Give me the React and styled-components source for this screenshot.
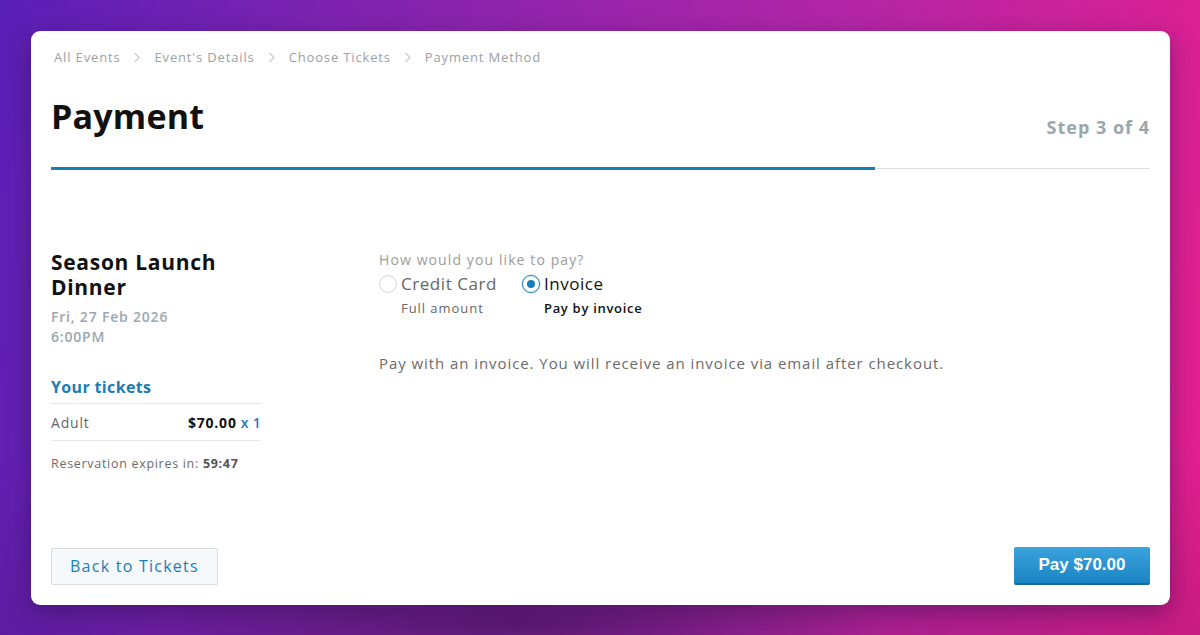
import React from "react";
import styled, { createGlobalStyle } from "styled-components";

const Global = createGlobalStyle`
  html, body { margin: 0; padding: 0; }
  body {
    width: 1200px;
    height: 635px;
    overflow: hidden;
    font-family: "Open Sans", "Noto Sans", sans-serif;
    background: linear-gradient(100deg, #5a1fb6 0%, #8a24ad 35%, #b326a6 65%, #e61f8c 100%);
  }
  * { box-sizing: border-box; }
`;

const Stage = styled.div`
  width: 1200px;
  height: 635px;
  padding: 31px 30px 30px 31px;
  background:
    radial-gradient(ellipse 520px 80px at 520px 625px, rgba(50, 20, 80, 0.55), transparent 70%),
    linear-gradient(180deg, rgba(0,0,0,0) 70%, rgba(40,10,60,0.15) 100%);
`;

const Card = styled.main`
  width: 1139px;
  height: 574px;
  background: #fff;
  border-radius: 9px;
  box-shadow: 0 8px 24px rgba(40, 10, 70, 0.45);
  padding: 0 20px 20px 20px;
  display: flex;
  flex-direction: column;
`;

const Breadcrumbs = styled.nav`
  display: flex;
  align-items: center;
  gap: 13px;
  padding: 17px 0 0 3px;
  height: 35px;
  font-size: 13px;
  color: #9aa1a6;
  letter-spacing: 0.85px;
`;

const Chevron = styled.svg`
  width: 8px;
  height: 11px;
  stroke: #c6cacd;
  fill: none;
  stroke-width: 1.2;
`;

const Header = styled.header`
  display: flex;
  align-items: flex-end;
  justify-content: space-between;
  height: 101px;
  padding-bottom: 10px;
`;

const Title = styled.h1`
  margin: 0 0 24px;
  font-size: 34px;
  font-weight: 700;
  color: #111;
  line-height: 1;
  letter-spacing: 0.2px;
`;

const Step = styled.div`
  font-size: 18px;
  font-weight: 700;
  color: #98a7ae;
  margin-bottom: 18px;
  letter-spacing: 1px;
`;

const Progress = styled.div`
  height: 3px;
  display: flex;
  align-items: center;
`;

const ProgressFill = styled.div`
  height: 3px;
  background: #1a7db5;
`;

const ProgressRest = styled.div`
  flex: 1;
  height: 1px;
  background: #dcdfe1;
`;

const Body = styled.section`
  flex: 1;
  display: flex;
  padding-top: 80px;
`;

const Sidebar = styled.aside`
  width: 210px;
  margin-right: 118px;
`;

const EventName = styled.h2`
  margin: 0;
  font-size: 21px;
  line-height: 25px;
  font-weight: 700;
  color: #111;
  letter-spacing: 0.7px;
`;

const EventDate = styled.div`
  margin-top: 7px;
  font-size: 14px;
  line-height: 20px;
  font-weight: 600;
  color: #9aa8b0;
  letter-spacing: 0.8px;
`;

const TicketsTitle = styled.h3`
  margin: 30px 0 0;
  font-size: 16px;
  font-weight: 700;
  line-height: 20px;
  color: #1a7db5;
  padding-bottom: 6px;
  border-bottom: 1px solid #e4e7e9;
  letter-spacing: 0.35px;
`;

const TicketRow = styled.div`
  display: flex;
  justify-content: space-between;
  align-items: center;
  height: 37px;
  border-bottom: 1px solid #e4e7e9;
  font-size: 14px;
  color: #666;
  letter-spacing: 0.8px;
`;

const Price = styled.span`
  font-weight: 700;
  color: #111;
`;

const Qty = styled.span`
  color: #1a7db5;
  font-weight: 600;
  margin-left: 4px;
  letter-spacing: 0.3px;
`;

const Expires = styled.div`
  margin-top: 14px;
  font-size: 12.5px;
  color: #6b6b6b;
  letter-spacing: 0.7px;
  b { color: #555; }
`;

const Main = styled.div`
  flex: 1;
  padding-top: 2px;
`;

const Question = styled.div`
  font-size: 14px;
  color: #9c9c9c;
  line-height: 16px;
  letter-spacing: 1.1px;
`;

const Options = styled.div`
  display: flex;
  gap: 25px;
  margin-top: 4px;
`;

const Option = styled.label`
  display: grid;
  grid-template-columns: 18px auto;
  column-gap: 4px;
  align-items: center;
`;

const Radio = styled.span`
  width: 18px;
  height: 18px;
  border-radius: 50%;
  border: 1px solid ${p => (p.$checked ? "#1a7db5" : "#d4d8db")};
  background: #fff;
  display: flex;
  align-items: center;
  justify-content: center;
  box-shadow: ${p => (p.$checked ? "0 0 0 1px rgba(26,125,181,0.15)" : "inset 0 1px 2px rgba(0,0,0,0.06)")};
  &::after {
    content: "";
    width: 8px;
    height: 8px;
    border-radius: 50%;
    background: #1a7db5;
    display: ${p => (p.$checked ? "block" : "none")};
  }
`;

const OptionLabel = styled.span`
  font-size: 17px;
  line-height: 24px;
  letter-spacing: 0.55px;
  color: ${p => (p.$checked ? "#111" : "#666")};
`;

const OptionSub = styled.span`
  grid-column: 2;
  font-size: 13px;
  line-height: 24px;
  font-weight: ${p => (p.$checked ? 600 : 500)};
  letter-spacing: ${p => (p.$checked ? "0.7px" : "0.95px")};
  color: ${p => (p.$checked ? "#111" : "#666")};
`;

const Note = styled.p`
  margin: 33px 0 0;
  font-size: 15px;
  color: #6b6b6b;
  letter-spacing: 0.93px;
`;

const Footer = styled.footer`
  display: flex;
  justify-content: space-between;
  align-items: center;
`;

const BackButton = styled.button`
  height: 37px;
  padding: 0 18px;
  font-family: inherit;
  font-size: 16px;
  color: #1a7db5;
  background: #f6f9fb;
  border: 1px solid #d9dee1;
  border-radius: 2px;
  letter-spacing: 1.25px;
`;

const PayButton = styled.button`
  height: 38px;
  width: 136px;
  font-family: "Liberation Sans", Arial, sans-serif;
  font-size: 17px;
  font-weight: 700;
  color: #fff;
  background: linear-gradient(180deg, #3aa3dc 0%, #1b85c4 100%);
  border: none;
  border-bottom: 2px solid #1769a0;
  border-radius: 2px;
`;

const Crumb = ({ children, last }) => (
  <>
    <span>{children}</span>
    {!last && (
      <Chevron viewBox="0 0 8 11">
        <path d="M1.5 0.8 L6 5.5 L1.5 10.2" />
      </Chevron>
    )}
  </>
);

export default function App() {
  const crumbs = ["All Events", "Event's Details", "Choose Tickets", "Payment Method"];
  return (
    <>
      <Global />
      <Stage>
        <Card>
          <Breadcrumbs>
            {crumbs.map((c, i) => (
              <Crumb key={c} last={i === crumbs.length - 1}>{c}</Crumb>
            ))}
          </Breadcrumbs>
          <Header>
            <Title>Payment</Title>
            <Step>Step 3 of 4</Step>
          </Header>
          <Progress>
            <ProgressFill style={{ width: `${(3 / 4) * 100}%` }} />
            <ProgressRest />
          </Progress>
          <Body>
            <Sidebar>
              <EventName>Season Launch<br />Dinner</EventName>
              <EventDate>Fri, 27 Feb 2026<br />6:00PM</EventDate>
              <TicketsTitle>Your tickets</TicketsTitle>
              <TicketRow>
                <span>Adult</span>
                <span><Price>$70.00</Price><Qty>x 1</Qty></span>
              </TicketRow>
              <Expires>Reservation expires in: <b>59:47</b></Expires>
            </Sidebar>
            <Main>
              <Question>How would you like to pay?</Question>
              <Options>
                <Option>
                  <Radio />
                  <OptionLabel>Credit Card</OptionLabel>
                  <OptionSub>Full amount</OptionSub>
                </Option>
                <Option>
                  <Radio $checked />
                  <OptionLabel $checked>Invoice</OptionLabel>
                  <OptionSub $checked>Pay by invoice</OptionSub>
                </Option>
              </Options>
              <Note>Pay with an invoice. You will receive an invoice via email after checkout.</Note>
            </Main>
          </Body>
          <Footer>
            <BackButton>Back to Tickets</BackButton>
            <PayButton>Pay $70.00</PayButton>
          </Footer>
        </Card>
      </Stage>
    </>
  );
}
